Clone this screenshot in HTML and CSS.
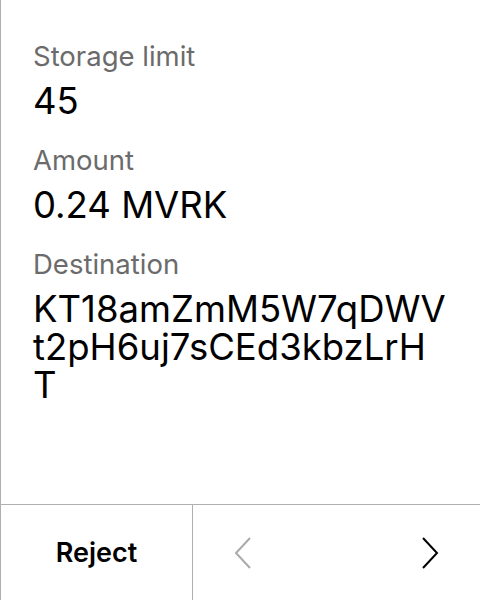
FILE: index.html
```html
<!DOCTYPE html>
<html>
<head>
<meta charset="utf-8">
<link rel="stylesheet" href="styles.css">
</head>
<body>
<div class="screen">
  <div class="content">
    <div class="field">
      <div class="label">Storage limit</div>
      <div class="value">45</div>
    </div>
    <div class="field">
      <div class="label">Amount</div>
      <div class="value">0.24 MVRK</div>
    </div>
    <div class="field">
      <div class="label">Destination</div>
      <div class="value">KT18amZmM5W7qDWV<br>t2pH6uj7sCEd3kbzLrH<br>T</div>
    </div>
  </div>
  <div class="footer">
    <div class="reject">Reject</div>
    <div class="nav">
      <svg class="chev prev" width="18" height="32" viewBox="0 0 18 32"><path d="M16 1 L2 16 L16 31" fill="none" stroke="#aaaaaa" stroke-width="2"/></svg>
      <svg class="chev next" width="18" height="32" viewBox="0 0 18 32"><path d="M2 1 L16 16 L2 31" fill="none" stroke="#000" stroke-width="2"/></svg>
    </div>
  </div>
</div>
</body>
</html>
```
FILE: styles.css
```css
html, body {
  margin: 0;
  padding: 0;
  background: #fff;
}
.screen {
  width: 480px;
  height: 600px;
  box-sizing: border-box;
  border-left: 1px solid #b0b0b0;
  display: flex;
  flex-direction: column;
  font-family: Inter, "Liberation Sans", sans-serif;
  color: #000;
}
.content {
  flex: 1;
  padding: 40px 20px 0 32px;
  display: flex;
  flex-direction: column;
  gap: 24px;
}
.label {
  font-size: 27.5px;
  line-height: 32px;
  color: #6b6b6b;
}
.value {
  font-size: 36.5px;
  line-height: 38px;
  margin-top: 10px;
}
.footer {
  height: 95px;
  border-top: 1px solid #b0b0b0;
  display: flex;
}
.reject {
  width: 191px;
  border-right: 1px solid #b0b0b0;
  display: flex;
  align-items: center;
  justify-content: center;
  font-size: 27px;
  font-weight: 600;
}
.nav {
  flex: 1;
  display: flex;
  align-items: center;
  justify-content: space-between;
  padding: 0 41px 0 41px;
}
.chev {
  display: block;
}
```
